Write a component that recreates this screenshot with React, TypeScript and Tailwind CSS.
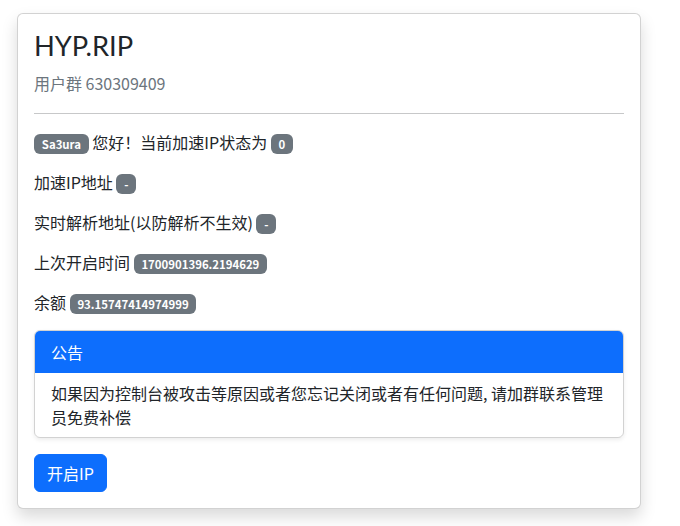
import React from 'react';

const FONT = { fontFamily: '"Noto Sans CJK SC", "Noto Sans", sans-serif' };

function Badge({ children }: { children: React.ReactNode }) {
  return (
    <span className="-my-[2px] inline-block rounded-[6px] bg-[#6c757d] px-[7.8px] py-[4.3px] align-baseline text-[11.4px] font-bold leading-none text-white">
      {children}
    </span>
  );
}

export default function App() {
  return (
    <div className="min-h-[526px] bg-white pt-[13px] pl-[17px] text-[#212529]" style={FONT}>
      <div className="w-[624px] rounded-[6px] border border-black/[.175] bg-white shadow-[0_8px_16px_rgba(0,0,0,0.15)]">
        <div className="p-4">
          <h2 className="mb-2 text-[27.3px] font-normal leading-[1.2]" style={{ fontFamily: 'Lato, "Noto Sans CJK SC", sans-serif' }}>
            HYP.RIP
          </h2>
          <p className="text-base leading-6 text-[#6c757d]">用户群 630309409</p>
          <hr className="mt-[18px] mb-4 border-t border-[#212529] opacity-25" />
          <p className="mb-4 text-base leading-6">
            <Badge>Sa3ura</Badge> 您好！当前加速IP状态为 <Badge>0</Badge>
          </p>
          <p className="mb-4 text-base leading-6">
            加速IP地址 <Badge>-</Badge>
          </p>
          <p className="mb-4 text-base leading-6">
            实时解析地址(以防解析不生效) <Badge>-</Badge>
          </p>
          <p className="mb-4 text-base leading-6">
            上次开启时间 <Badge>1700901396.2194629</Badge>
          </p>
          <p className="mb-4 text-base leading-6">
            余额 <Badge>93.15747414974999</Badge>
          </p>
          <div className="mb-4 overflow-hidden rounded-[6px] border border-black/[.175] shadow-[0_2px_4px_rgba(0,0,0,0.075)]">
            <div className="bg-[#0d6efd] px-4 py-[9px] text-base leading-6 text-white">公告</div>
            <div className="px-4 py-2 text-base leading-6">
              如果因为控制台被攻击等原因或者您忘记关闭或者有任何问题, 请加群联系管理员免费补偿
            </div>
          </div>
          <button className="rounded-[6px] border border-[#0d6efd] bg-[#0d6efd] px-3 py-[6px] text-base leading-6 text-white">
            开启IP
          </button>
        </div>
      </div>
    </div>
  );
}
